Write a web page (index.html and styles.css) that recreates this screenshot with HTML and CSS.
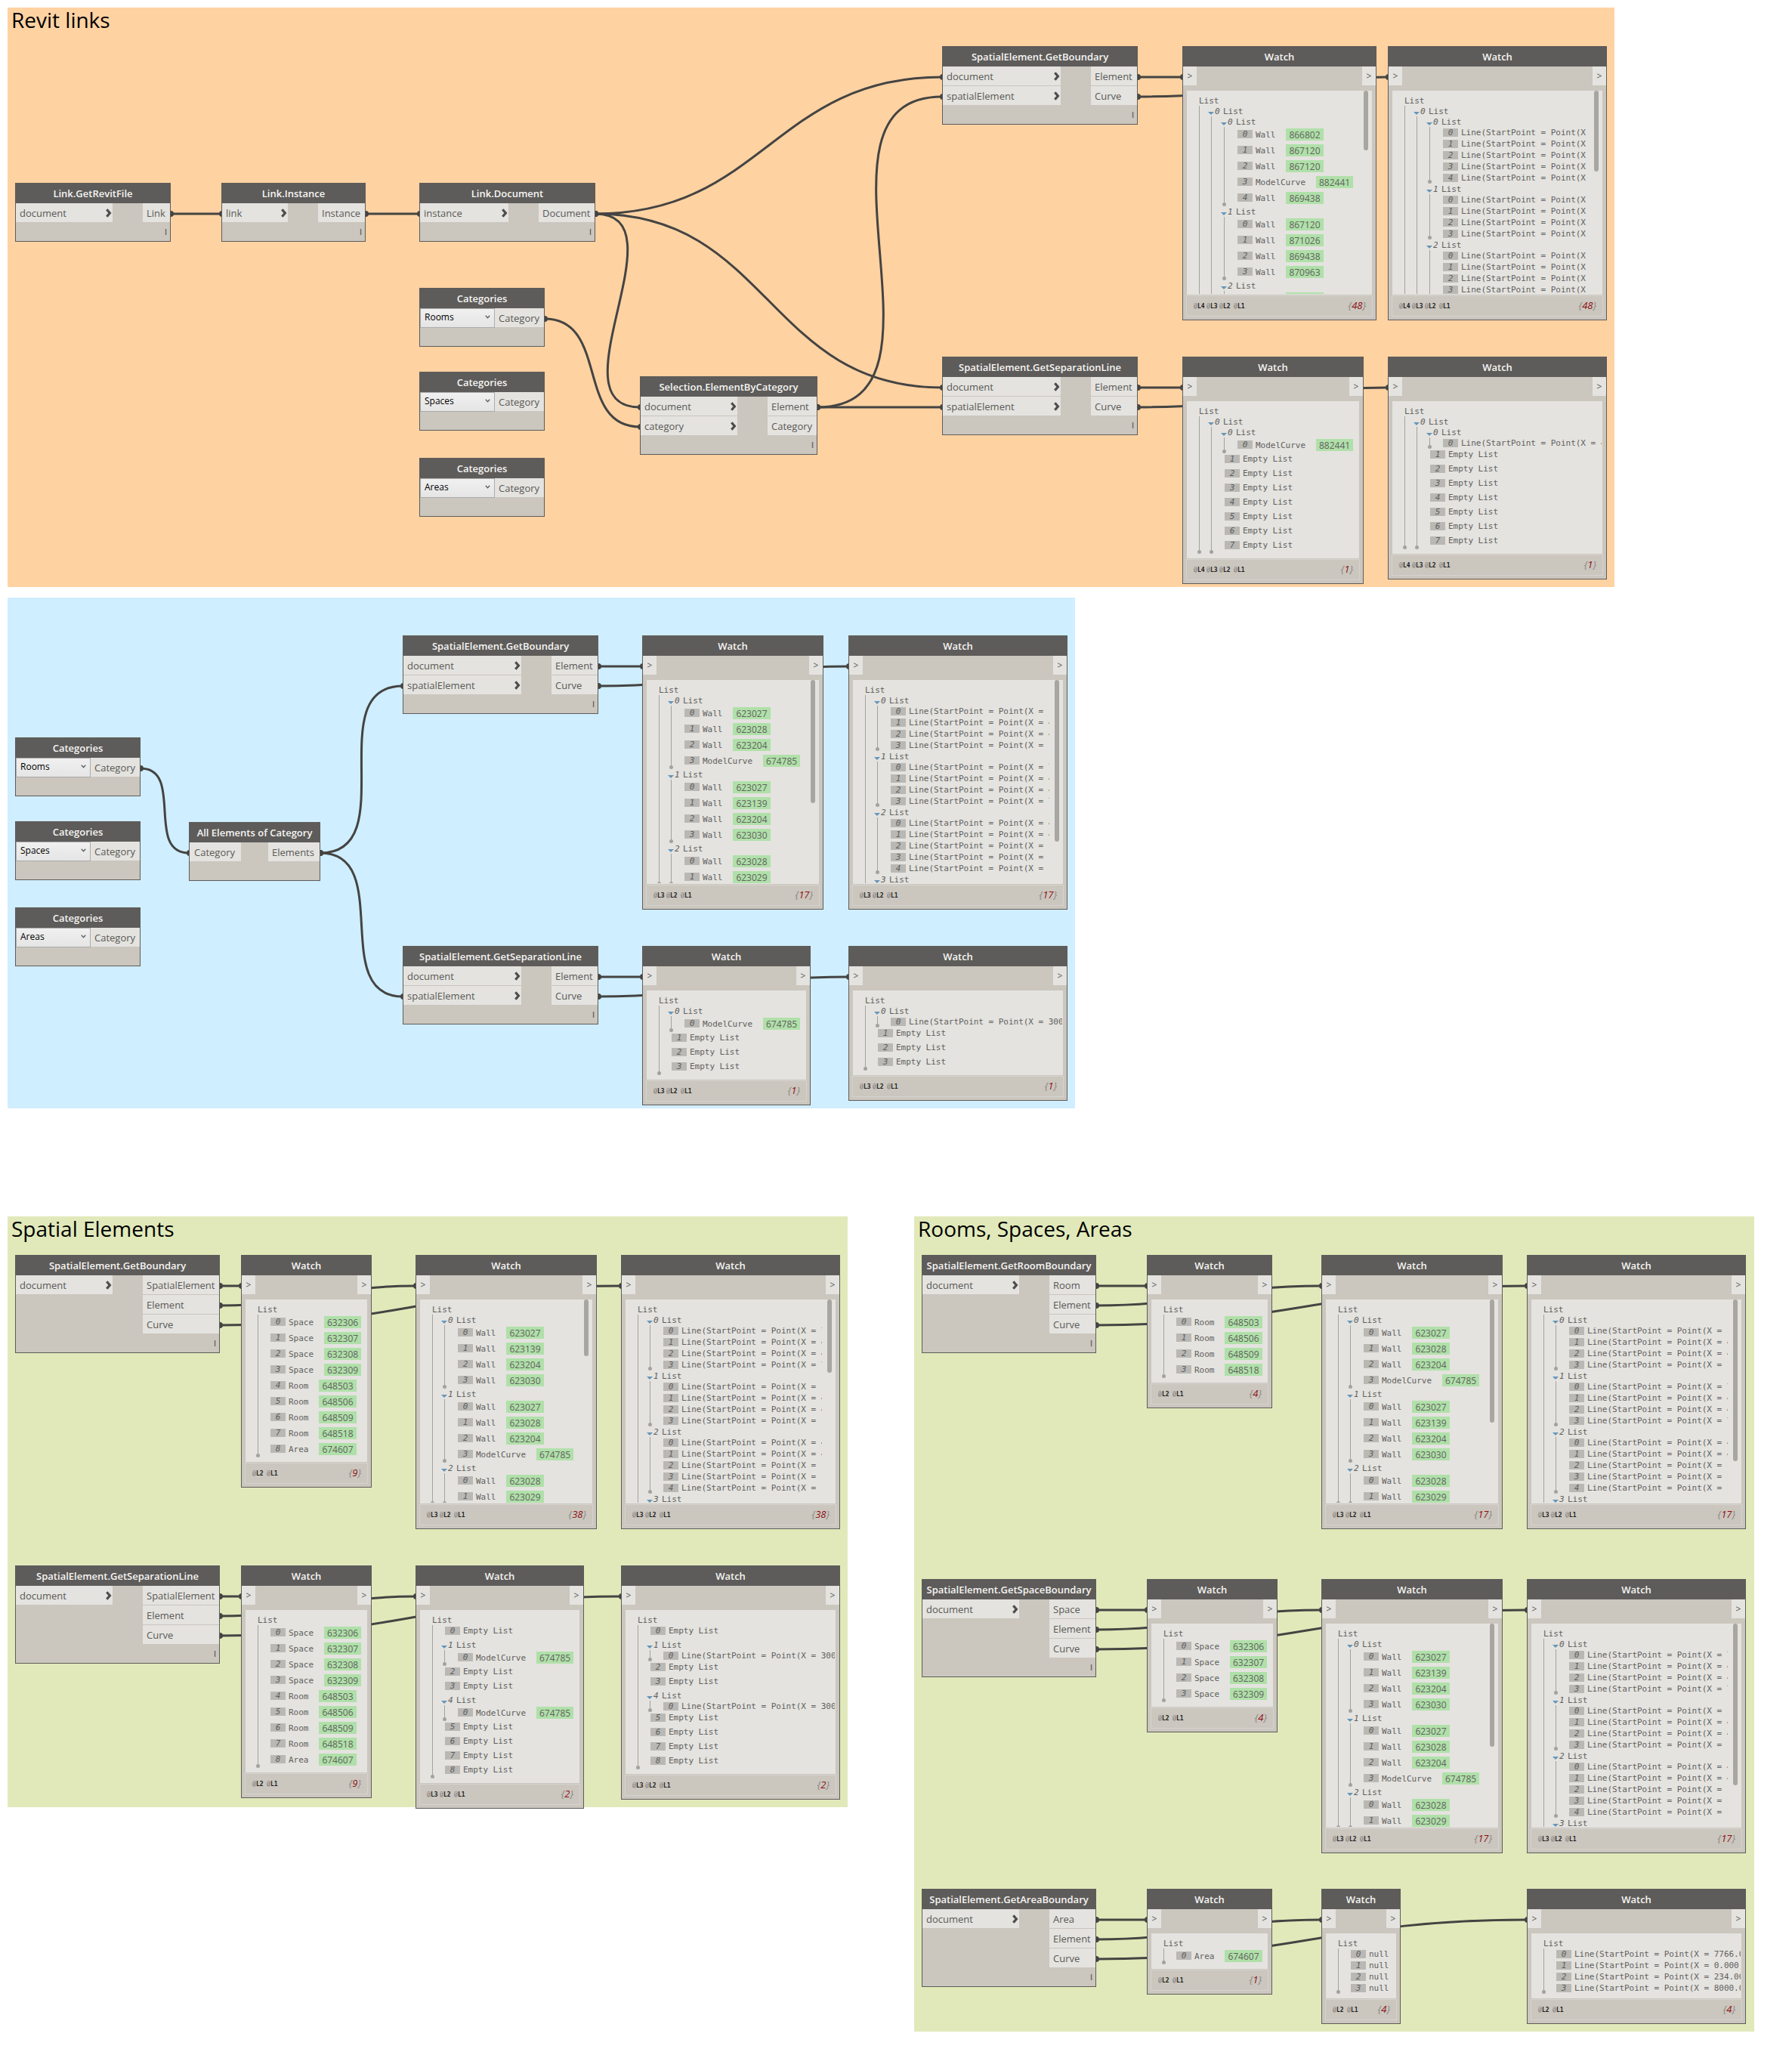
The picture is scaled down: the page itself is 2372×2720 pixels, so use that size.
FILE: index.html
```html
<!DOCTYPE html>
<html lang="en">
<head>
<meta charset="utf-8">
<title>Spatial element graph</title>
<link rel="stylesheet" href="styles.css">
</head>
<body>
<main class="canvas">
  <section class="group group-orange"><h2 class="group-title">Revit links</h2></section>
  <section class="group group-blue"></section>
  <section class="group group-green-left"><h2 class="group-title">Spatial Elements</h2></section>
  <section class="group group-green-right"><h2 class="group-title">Rooms, Spaces, Areas</h2></section>
  <svg class="wires" id="wires" width="2372" height="2720" viewBox="0 0 2372 2720"></svg>
  <div id="nodes"></div>
</main>
<script src="graph.js"></script>
</body>
</html>
```
FILE: styles.css
```css
* { box-sizing: border-box; }

body {
  margin: 0;
  background: #fff;
  font-family: "Open Sans", "Noto Sans", sans-serif;
  color: #5a5957;
}

.canvas {
  position: relative;
  width: 2372px;
  height: 2720px;
  overflow: hidden;
}

/* coloured groups behind the nodes */
.group { position: absolute; }
.group-orange { left: 10px; top: 10px; width: 2127px; height: 767px; background: #ffd2a2; }
.group-blue { left: 10px; top: 791px; width: 1413px; height: 676px; background: #cfeeff; }
.group-green-left { left: 10px; top: 1610px; width: 1112px; height: 782px; background: #e1e9ba; }
.group-green-right { left: 1210px; top: 1610px; width: 1112px; height: 1079px; background: #e1e9ba; }

.group-title {
  margin: 0;
  padding-left: 5px;
  font-size: 28px;
  font-weight: 400;
  line-height: 33px;
  color: #000;
}

.wires { position: absolute; left: 0; top: 0; }
.wires path { fill: none; stroke: #444442; stroke-width: 3; }
.wires circle { fill: #444442; }

/* node frame */
.node {
  position: absolute;
  display: flex;
  flex-direction: column;
  background: #cbc6be;
  border: 1px solid #5e5c5a;
}

.node-title {
  flex: none;
  height: 26px;
  margin: 0;
  background: #5e5c5a;
  color: #f6f5f3;
  font-size: 13px;
  font-weight: 600;
  line-height: 26px;
  text-align: center;
  white-space: nowrap;
}

.ports {
  display: flex;
  justify-content: space-between;
  gap: 40px;
}

.ports-in, .ports-out {
  display: flex;
  flex-direction: column;
  gap: 1px;
}
.ports-in { flex: 1; }

.port {
  display: flex;
  align-items: center;
  justify-content: space-between;
  height: 25px;
  padding: 0 1px 0 5px;
  background: #e4e3df;
  font-size: 13px;
  line-height: 26px;
  white-space: nowrap;
}
.ports-plain { gap: 36px; }
.ports-plain .ports-in .port { padding-left: 6px; }

.chevron { width: 8px; height: 12px; fill: none; stroke: #4e4d4b; stroke-width: 3.2; }

.lacing {
  margin: auto 4px 4px auto;
  font-size: 10px;
  font-weight: 600;
  line-height: 16px;
}

.combo {
  display: flex;
  align-items: center;
  justify-content: space-between;
  width: 99px;
  height: 26px;
  padding: 0 5px 3px;
  border: 1px solid #acacac;
  background: linear-gradient(#f0f0f0, #e5e5e5);
  color: #000;
  font-size: 12px;
  line-height: 20px;
}
.combo svg { width: 7px; height: 5px; fill: none; stroke: #606060; stroke-width: 1.4; }
.ports-combo { gap: 0; }
.ports-combo .ports-out { flex: 1; }

/* watch nodes */
.ports-watch { height: 25px; }
.ports-watch .port { width: 18px; padding: 0; justify-content: center; font-size: 12px; }

.watch-view {
  position: relative;
  flex: 1;
  min-height: 0;
  margin: 7px 5px 0;
  padding: 0 1px 1px 0;
  background: #e4e3df;
}
.watch-view.scrolled { padding-right: 18px; }

.thumb {
  position: absolute;
  right: 5px;
  top: 0;
  width: 6px;
  border-radius: 3px;
  background: #a7a6a1;
}

.tree {
  height: 100%;
  padding: 6px 0 0 16px;
  overflow: hidden;
  font-family: "DejaVu Sans Mono", monospace;
  font-size: 11px;
  letter-spacing: -0.025px;
  line-height: 14px;
  white-space: pre;
  color: #61605e;
}

.root { height: 14px; line-height: 16px; }

.tree ul {
  position: relative;
  margin: 0;
  padding: 0 0 0 17px;
  list-style: none;
}
.tree ul::before {
  content: "";
  position: absolute;
  left: 0;
  top: 0;
  bottom: 3px;
  width: 1px;
  background: #a3a29f;
}
.tree ul::after {
  content: "";
  position: absolute;
  left: -2px;
  bottom: 0;
  width: 5px;
  height: 5px;
  border-radius: 50%;
  background: #a3a29f;
}
.tree ul ul::before { left: -1px; }
.tree ul ul::after { left: -3px; }

.branch {
  display: flex;
  height: 14px;
  margin-left: -5px;
  line-height: 16px;
}
.branch svg { flex: none; width: 8px; height: 4px; margin-top: 8px; fill: #6495ba; }
.branch i { flex: none; width: 12px; padding-left: 1px; }

.item { display: flex; height: 15px; }
.item.empty { height: 19px; }
.item.element { height: 21px; }
.item.element .value, .item.element .id { margin-top: 2px; line-height: 17px; }

.index {
  flex: none;
  width: 20px;
  height: 11px;
  margin-top: 2px;
  background: #b9b8b4;
  font-style: italic;
  line-height: 12px;
  text-align: center;
}
.item.element .index { margin-top: 4px; height: 11px; }
.value { margin-left: 4px; line-height: 16px; }
.id {
  height: 16px;
  margin-left: 14px;
  padding: 0 4px;
  background: #b0e0a9;
  font-family: "Open Sans", sans-serif;
  font-size: 12px;
  letter-spacing: 0;
}

.watch-foot {
  flex: none;
  display: flex;
  align-items: center;
  justify-content: space-between;
  height: 28px;
  margin: 1px 4px 4px;
  padding: 0 8px 0 9px;
  border: 1px solid #d6d3cf;
}
.levels {
  display: flex;
  gap: 2.4px;
  font-family: "Liberation Mono", monospace;
  font-size: 8.3px;
  color: #7c7a78;
}
.levels b { font-family: "DejaVu Sans Mono", monospace; font-size: 8px; color: #1c1c1c; }
.levels span:last-child { margin-left: 2px; }
.count { font-size: 13px; font-style: italic; line-height: 20px; margin-top: -3px; color: #8a8886; }
.count b { font-weight: 500; color: #8b0f12; }
```
FILE: graph.js
```javascript
const CHEVRON = '<svg class="chevron" viewBox="0 0 8 12"><path d="M1.3 1.2 5.4 6 1.3 10.8"/></svg>';
const ARROW = '<svg viewBox="0 0 8 4"><path d="M0 0h8L4 4z"/></svg>';
const COMBO_ARROW = '<svg viewBox="0 0 7 5"><path d="M.8.8 3.5 3.8 6.2.8"/></svg>';

// Tree data: arrays are branches, strings are leaves, "Name#id" is a linked element.
const walls = (...ids) => ids.map(id => isNaN(id) ? id : `Wall#${id}`);
const lines = starts => [...starts].map(s => `Line(StartPoint = Point(X = ${s}`);
const empties = n => Array(n).fill('Empty List');
const LONG = 'Line(StartPoint = Point(X = 3000';

const wallsA = walls(623027, 623028, 623204, 'ModelCurve#674785');
const wallsB = walls(623027, 623139, 623204, 623030);
const wallsC = walls(623028, 623029);
const spaces = ['Space#632306', 'Space#632307', 'Space#632308', 'Space#632309'];
const rooms = ['Room#648503', 'Room#648506', 'Room#648509', 'Room#648518'];
const area = ['Area#674607'];
const everything = [...spaces, ...rooms, ...area];
const linesRoom = [lines('1441'), lines('7447'), lines('44111'), lines('1')];
const linesSpace = [lines('7447'), lines('1441'), lines('44111'), lines('1')];

// Function nodes: x, y, width, title, inputs, outputs, output column width
const functions = [
  [20, 242, 206, 'Link.GetRevitFile', ['document'], ['Link'], 36],
  [293, 242, 191, 'Link.Instance', ['link'], ['Instance'], 62],
  [555, 242, 233, 'Link.Document', ['instance'], ['Document'], 74],
  [847, 498, 235, 'Selection.ElementByCategory', ['document', 'category'], ['Element', 'Category'], 65],
  [1247, 61, 259, 'SpatialElement.GetBoundary', ['document', 'spatialElement'], ['Element', 'Curve'], 61],
  [1247, 472, 259, 'SpatialElement.GetSeparationLine', ['document', 'spatialElement'], ['Element', 'Curve'], 61],
  [250, 1088, 174, 'All Elements of Category', ['Category'], ['Elements'], 68, 'plain'],
  [533, 841, 259, 'SpatialElement.GetBoundary', ['document', 'spatialElement'], ['Element', 'Curve'], 61],
  [533, 1252, 259, 'SpatialElement.GetSeparationLine', ['document', 'spatialElement'], ['Element', 'Curve'], 61],
  [20, 1661, 271, 'SpatialElement.GetBoundary', ['document'], ['SpatialElement', 'Element', 'Curve'], 101],
  [20, 2072, 271, 'SpatialElement.GetSeparationLine', ['document'], ['SpatialElement', 'Element', 'Curve'], 101],
  [1220, 1661, 231, 'SpatialElement.GetRoomBoundary', ['document'], ['Room', 'Element', 'Curve'], 61],
  [1220, 2090, 231, 'SpatialElement.GetSpaceBoundary', ['document'], ['Space', 'Element', 'Curve'], 61],
  [1220, 2500, 231, 'SpatialElement.GetAreaBoundary', ['document'], ['Area', 'Element', 'Curve'], 61],
];

// Category pickers: x, y, selection
const pickers = [
  [555, 381, 'Rooms'], [555, 492, 'Spaces'], [555, 606, 'Areas'],
  [20, 976, 'Rooms'], [20, 1087, 'Spaces'], [20, 1201, 'Areas'],
];

// Watch nodes: x, y, width, height, levels, count, tree, scroll thumb height
const watches = [
  [1565, 61, 257, 363, 4, 48, [[walls(866802, 867120, 867120, 'ModelCurve#882441', 869438), walls(867120, 871026, 869438, 870963), walls(867120)]], 79],
  [1837, 61, 290, 363, 4, 48, [[lines('44444'), lines('4444'), lines('44444')]], 107],
  [1565, 472, 240, 301, 4, 1, [[['ModelCurve#882441'], ...empties(7)]]],
  [1837, 472, 290, 295, 4, 1, [[lines('4'), ...empties(7)]]],
  [850, 841, 240, 363, 3, 17, [wallsA, wallsB, wallsC], 163],
  [1123, 841, 290, 363, 3, 17, linesRoom, 214],
  [850, 1252, 223, 211, 3, 1, [['ModelCurve#674785'], ...empties(3)]],
  [1123, 1252, 290, 205, 3, 1, [[LONG], ...empties(3)]],
  [319, 1661, 173, 308, 2, 9, everything],
  [550, 1661, 240, 363, 3, 38, [wallsB, wallsA, wallsC], 75],
  [822, 1661, 290, 363, 3, 38, linesSpace, 97],
  [319, 2072, 173, 308, 2, 9, everything],
  [550, 2072, 223, 322, 3, 2, ['Empty List', ['ModelCurve#674785'], ...empties(2), ['ModelCurve#674785'], ...empties(4)]],
  [822, 2072, 290, 310, 3, 2, ['Empty List', [LONG], ...empties(2), [LONG], ...empties(4)]],
  [1518, 1661, 166, 203, 2, 4, rooms],
  [1749, 1661, 240, 363, 3, 17, [wallsA, wallsB, wallsC], 163],
  [2021, 1661, 290, 363, 3, 17, linesRoom, 214],
  [1518, 2090, 173, 203, 2, 4, spaces],
  [1749, 2090, 240, 363, 3, 17, [wallsB, wallsA, wallsC], 163],
  [2021, 2090, 290, 363, 3, 17, linesSpace, 214],
  [1518, 2500, 166, 140, 2, 1, area],
  [1749, 2500, 105, 179, 2, 4, ['null', 'null', 'null', 'null']],
  [2021, 2500, 290, 179, 2, 4, ['7766.0', '0.000,', '234.00', '8000.0'].map(s => `Line(StartPoint = Point(X = ${s}`)],
];

// Wires: right edge and top of the source, its port, left edge and top of the target, its port
const wires = [
  [226, 242, 0, 293, 242, 0], [484, 242, 0, 555, 242, 0],
  [788, 242, 0, 1247, 61, 0], [788, 242, 0, 1247, 472, 0], [788, 242, 0, 847, 498, 0],
  [721, 381, 0, 847, 498, 1],
  [1082, 498, 0, 1247, 61, 1], [1082, 498, 0, 1247, 472, 1],
  [1506, 61, 0, 1565, 61, 0], [1506, 61, 1, 1837, 61, 0],
  [1506, 472, 0, 1565, 472, 0], [1506, 472, 1, 1837, 472, 0],
  [186, 976, 0, 250, 1088, 0],
  [424, 1088, 0, 533, 841, 1], [424, 1088, 0, 533, 1252, 1],
  [792, 841, 0, 850, 841, 0], [792, 841, 1, 1123, 841, 0],
  [792, 1252, 0, 850, 1252, 0], [792, 1252, 1, 1123, 1252, 0],
];
for (const [right, top, a, b, c] of [
  [291, 1661, 319, 550, 822], [291, 2072, 319, 550, 822],
  [1451, 1661, 1518, 1749, 2021], [1451, 2090, 1518, 1749, 2021], [1451, 2500, 1518, 1749, 2021],
]) [a, b, c].forEach((x, port) => wires.push([right, top, port, x, top, 0]));

const portY = (top, port) => top + 41 + port * 26;

const wireSvg = ([x1, top1, p1, x2, top2, p2]) => {
  const y1 = portY(top1, p1), y2 = portY(top2, p2);
  const bend = 0.45 * Math.hypot(x2 - x1, y2 - y1);
  return `<path d="M${x1} ${y1}C${x1 + bend} ${y1} ${x2 - bend} ${y2} ${x2} ${y2}"/>` +
    `<circle cx="${x1}" cy="${y1}" r="4"/><circle cx="${x2 + 1}" cy="${y2}" r="4"/>`;
};

const frame = (x, y, w, h, title, body) =>
  `<article class="node" style="left:${x}px;top:${y}px;width:${w}px;height:${h}px"><h3 class="node-title">${title}</h3>${body}</article>`;

const functionNode = ([x, y, w, title, ins, outs, outWidth, plain]) => frame(x, y, w, 52 + 26 * Math.max(ins.length, outs.length), title,
  `<div class="ports${plain ? ' ports-plain' : ''}"><div class="ports-in">${ins.map(p => `<div class="port">${p}${plain ? '' : CHEVRON}</div>`).join('')}</div>` +
  `<div class="ports-out" style="width:${outWidth}px">${outs.map(p => `<div class="port">${p}</div>`).join('')}</div></div>` +
  (plain ? '' : '<span class="lacing">I</span>'));

const pickerNode = ([x, y, value]) => frame(x, y, 166, 78, 'Categories',
  `<div class="ports ports-combo"><div class="combo">${value}${COMBO_ARROW}</div><div class="ports-out"><div class="port">Category</div></div></div>`);

const treeList = children => `<ul>${children.map((child, i) => {
  if (Array.isArray(child)) return `<li><div class="branch">${ARROW}<i>${i}</i>List</div>${treeList(child)}</li>`;
  const [name, id] = child.split('#');
  const kind = id ? ' element' : name === 'Empty List' ? ' empty' : '';
  return `<li class="item${kind}"><span class="index">${i}</span><span class="value">${name}</span>${id ? `<span class="id">${id}</span>` : ''}</li>`;
}).join('')}</ul>`;

const watchNode = ([x, y, w, h, levels, count, tree, thumb]) => frame(x, y, w, h, 'Watch',
  `<div class="ports ports-watch"><div class="port">&gt;</div><div class="port">&gt;</div></div>` +
  `<div class="watch-view${thumb ? ' scrolled' : ''}"><div class="tree"><div class="root">List</div>${treeList(tree)}</div>${thumb ? `<div class="thumb" style="height:${thumb}px"></div>` : ''}</div>` +
  `<div class="watch-foot"><div class="levels">${Array.from({ length: levels }, (_, i) => `<span>@<b>L${levels - i}</b></span>`).join('')}</div>` +
  `<div class="count">{<b>${count}</b>}</div></div>`);

document.getElementById('wires').innerHTML = wires.map(wireSvg).join('');
document.getElementById('nodes').innerHTML =
  functions.map(functionNode).join('') + pickers.map(pickerNode).join('') + watches.map(watchNode).join('');
```
